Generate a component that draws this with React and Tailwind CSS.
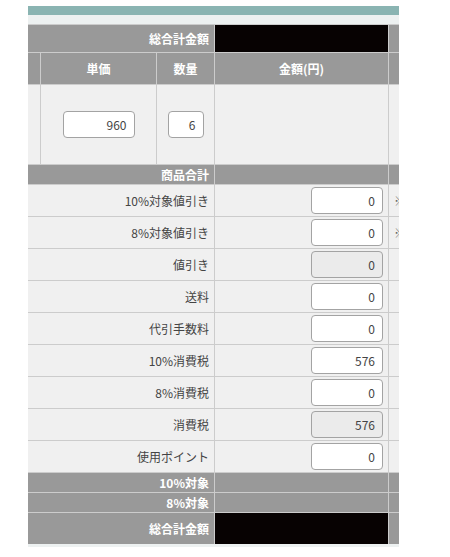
import React from "react";

const font = { fontFamily: '"Noto Sans CJK JP", "Noto Sans", sans-serif' };

function Field({ value, disabled, w = "w-[72px]" }) {
  return (
    <input
      type="text"
      readOnly
      value={value}
      className={`${w} h-[27px] rounded-[4px] border border-[#a3a3a3] px-[7px] text-right text-[12px] text-[#444] outline-none ${
        disabled ? "bg-[#ebebeb]" : "bg-white"
      }`}
      style={font}
    />
  );
}

const rows = [
  { label: "10%対象値引き", value: "0", note: true },
  { label: "8%対象値引き", value: "0", note: true },
  { label: "値引き", value: "0", disabled: true },
  { label: "送料", value: "0" },
  { label: "代引手数料", value: "0" },
  { label: "10%消費税", value: "576" },
  { label: "8%消費税", value: "0" },
  { label: "消費税", value: "576", disabled: true },
  { label: "使用ポイント", value: "0" },
];

export default function App() {
  return (
    <div className="min-h-[557px] w-[450px] bg-white pt-[6px]" style={font}>
      <div className="ml-[28px] w-[371px]">
        <div className="h-[9px] bg-[#8ab4b2]" />
        <div className="h-[9px] bg-[#edf1f1]" />
        <div className="grid grid-cols-[12px_115px_57px_173px_10px] gap-px bg-[#cccccc] pt-px text-[12px]">
          {/* 総合計金額 top */}
          <div className="col-span-3 flex h-[27px] items-center justify-end bg-[#999999] pr-[5px] font-bold text-white">
            総合計金額
          </div>
          <div className="bg-[#070202]" />
          <div className="bg-[#999999]" />

          {/* header */}
          <div className="h-[31px] bg-[#999999]" />
          <div className="flex items-center justify-center bg-[#999999] font-bold text-white">単価</div>
          <div className="flex items-center justify-center bg-[#999999] font-bold text-white">数量</div>
          <div className="flex items-center justify-center bg-[#999999] font-bold text-white">金額(円)</div>
          <div className="bg-[#999999]" />

          {/* product row */}
          <div className="h-[79px] bg-[#f0f0f0]" />
          <div className="flex items-center justify-center bg-[#f0f0f0]">
            <Field value="960" />
          </div>
          <div className="flex items-center justify-center bg-[#f0f0f0]">
            <Field value="6" w="w-[36px]" />
          </div>
          <div className="bg-[#f0f0f0]" />
          <div className="bg-[#f0f0f0]" />

          {/* 商品合計 */}
          <div className="col-span-3 flex h-[19px] items-center justify-end bg-[#999999] pr-[5px] font-bold leading-none text-white">
            商品合計
          </div>
          <div className="bg-[#999999]" />
          <div className="bg-[#999999]" />

          {rows.map((r) => (
            <React.Fragment key={r.label}>
              <div className="col-span-3 flex h-[31px] items-center justify-end bg-[#f0f0f0] pr-[5px] text-[#444]">
                {r.label}
              </div>
              <div className="flex items-center justify-end bg-[#f0f0f0] pr-[5px]">
                <Field value={r.value} disabled={r.disabled} />
              </div>
              <div className="flex items-center overflow-hidden bg-[#f0f0f0] pl-[5px] text-[#666]">
                {r.note ? <span className="whitespace-nowrap">※</span> : null}
              </div>
            </React.Fragment>
          ))}

          {/* 10%対象 */}
          <div className="col-span-3 flex h-[19px] items-center justify-end bg-[#999999] pr-[5px] font-bold leading-none text-white">
            10%対象
          </div>
          <div className="bg-[#999999]" />
          <div className="bg-[#999999]" />

          {/* 8%対象 */}
          <div className="col-span-3 flex h-[19px] items-center justify-end bg-[#999999] pr-[5px] font-bold leading-none text-white">
            8%対象
          </div>
          <div className="bg-[#999999]" />
          <div className="bg-[#999999]" />

          {/* 総合計金額 bottom */}
          <div className="col-span-3 flex h-[31px] items-center justify-end bg-[#999999] pr-[5px] font-bold text-white">
            総合計金額
          </div>
          <div className="bg-[#070202]" />
          <div className="bg-[#999999]" />
        </div>
        <div className="h-[3px] bg-[#edf1f1]" />
      </div>
    </div>
  );
}
